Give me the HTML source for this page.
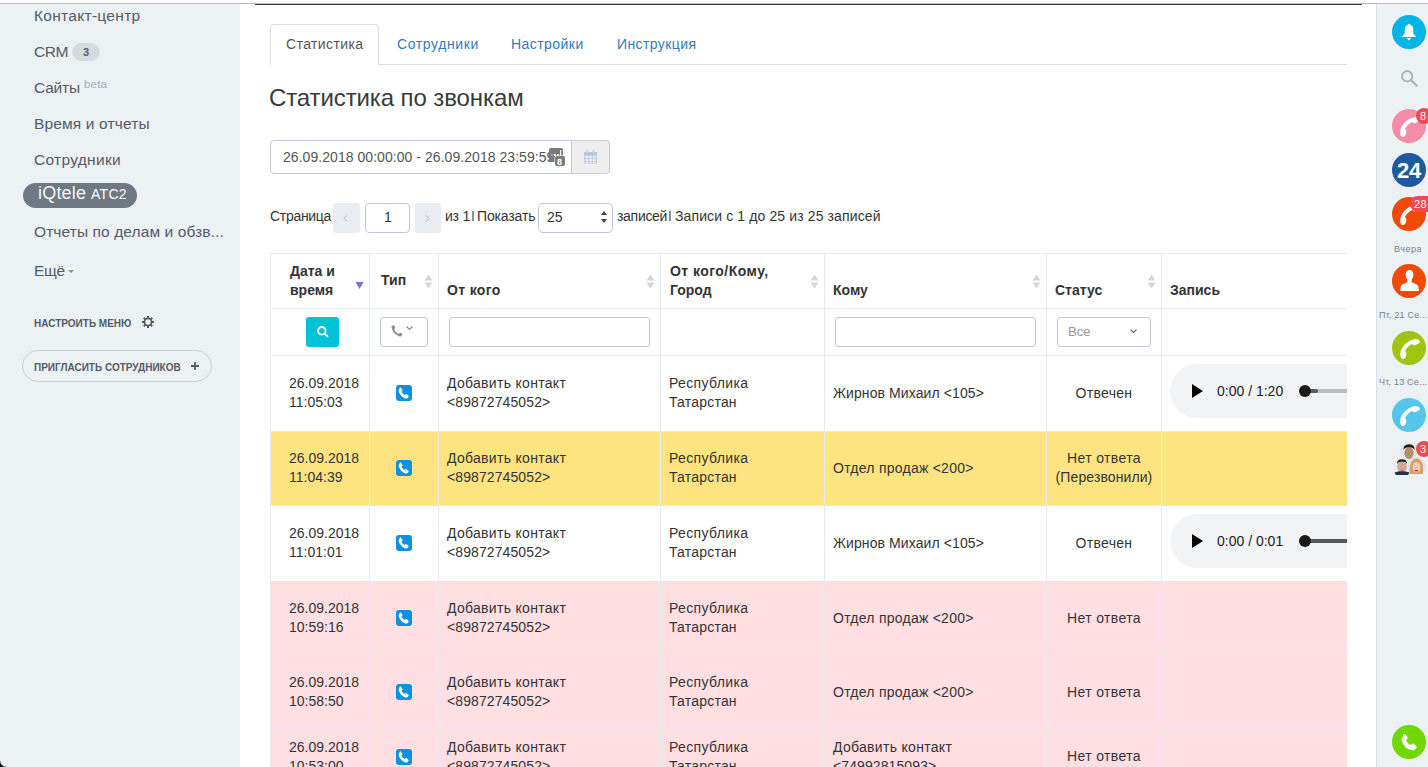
<!DOCTYPE html>
<html><head><meta charset="utf-8"><style>
*{box-sizing:border-box}
html,body{margin:0;padding:0}
body{width:1428px;height:767px;overflow:hidden;position:relative;background:#fff;font-family:"Liberation Sans",sans-serif;color:#333}
.t{position:absolute;white-space:nowrap}
.b{position:absolute}
svg{position:absolute;overflow:visible}
#tw{position:absolute;left:0;top:0;width:1347px;height:767px;overflow:hidden}
</style></head><body>
<div class="b" style="left:0px;top:4px;width:240px;height:763px;background:#ecf1f4"></div>
<div class="b" style="left:1376px;top:4px;width:52px;height:763px;background:#ecf1f4;border-left:1px solid #d9e1e6"></div>
<div class="b" style="left:0px;top:3px;width:1428px;height:1px;background:#bbbbbd"></div>
<div class="b" style="left:255px;top:4px;width:1107px;height:1px;background:#363a4c"></div>
<div class="t" style="left:34px;top:8px;font-size:15.5px;line-height:15.5px;color:#535c69;font-weight:normal;letter-spacing:0.3px;">Контакт-центр</div>
<div class="t" style="left:34px;top:44px;font-size:15.5px;line-height:15.5px;color:#535c69;font-weight:normal;letter-spacing:-0.4px;">CRM</div>
<div class="b" style="left:72px;top:43px;width:28px;height:18px;background:#d5dbe1;border-radius:9px"></div>
<div class="t" style="left:83px;top:47px;font-size:11px;line-height:11px;color:#535c69;font-weight:bold;">3</div>
<div class="t" style="left:34px;top:80px;font-size:15.5px;line-height:15.5px;color:#535c69;font-weight:normal;letter-spacing:-0.2px;">Сайты</div>
<div class="t" style="left:84px;top:79px;font-size:11.5px;line-height:11.5px;color:#a7adb3;font-weight:normal;letter-spacing:0.2px">beta</div>
<div class="t" style="left:34px;top:116px;font-size:15.5px;line-height:15.5px;color:#535c69;font-weight:normal;letter-spacing:0.15px;">Время и отчеты</div>
<div class="t" style="left:34px;top:152px;font-size:15.5px;line-height:15.5px;color:#535c69;font-weight:normal;letter-spacing:0.3px;">Сотрудники</div>
<div class="b" style="left:23px;top:183px;width:114px;height:25px;background:#6f7983;border-radius:13px"></div>
<div class="t" style="left:38px;top:184px;font-size:18px;line-height:18px;color:#f4f4f4;font-weight:normal;letter-spacing:0.2px">iQtele</div>
<div class="t" style="left:91px;top:187px;font-size:14px;line-height:14px;color:#fff;font-weight:normal;letter-spacing:0.3px">ATC2</div>
<div class="t" style="left:34px;top:224px;font-size:15.5px;line-height:15.5px;color:#535c69;font-weight:normal;letter-spacing:0.1px;">Отчеты по делам и обзв...</div>
<div class="t" style="left:34px;top:263px;font-size:15.5px;line-height:15.5px;color:#535c69;font-weight:normal;letter-spacing:-0.3px;">Ещё</div>
<svg style="left:68px;top:270px" width="6" height="3" viewBox="0 0 6 3"><path d="M0 0h6l-3 3z" fill="#8a929b"/></svg>
<div class="t" style="left:34px;top:319px;font-size:10px;line-height:10px;color:#535c69;font-weight:bold;">НАСТРОИТЬ МЕНЮ</div>
<svg style="left:142px;top:316px" width="12" height="12" viewBox="0 0 12 12"><g transform="translate(6 6)" fill="#535c69"><rect x="-1" y="-6" width="2" height="12"/><rect x="-1" y="-6" width="2" height="12" transform="rotate(45)"/><rect x="-1" y="-6" width="2" height="12" transform="rotate(90)"/><rect x="-1" y="-6" width="2" height="12" transform="rotate(135)"/><circle r="4.400"/></g><circle cx="6" cy="6" r="2.700" fill="#ecf1f4"/></svg>
<div class="b" style="left:22px;top:350px;width:190px;height:32px;border:1px solid #c9d0d6;border-radius:16px"></div>
<div class="t" style="left:34px;top:363px;font-size:10px;line-height:10px;color:#535c69;font-weight:bold;">ПРИГЛАСИТЬ СОТРУДНИКОВ</div>
<svg style="left:191px;top:362px" width="8" height="8" viewBox="0 0 8 8"><path d="M3.1 0h1.8v8H3.1z M0 3.1h8v1.8H0z" fill="#535c69"/></svg>
<div class="b" style="left:270px;top:64px;width:1077px;height:1px;background:#dddddd"></div>
<div class="b" style="left:270px;top:24px;width:109px;height:41px;background:#fff;border:1px solid #dddddd;border-bottom:1px solid #fff;border-radius:4px 4px 0 0"></div>
<div class="t" style="left:286px;top:37px;font-size:14px;line-height:14px;color:#555;font-weight:normal;letter-spacing:0.4px">Статистика</div>
<div class="t" style="left:397px;top:37px;font-size:14px;line-height:14px;color:#2f7bbf;font-weight:normal;letter-spacing:0.6px">Сотрудники</div>
<div class="t" style="left:511px;top:37px;font-size:14px;line-height:14px;color:#2f7bbf;font-weight:normal;letter-spacing:0.45px">Настройки</div>
<div class="t" style="left:617px;top:37px;font-size:14px;line-height:14px;color:#2f7bbf;font-weight:normal;letter-spacing:0.4px">Инструкция</div>
<div class="t" style="left:269px;top:86px;font-size:24px;line-height:24px;color:#3a3a3a;font-weight:normal;letter-spacing:-0.1px">Статистика по звонкам</div>
<div class="b" style="left:270px;top:140px;width:302px;height:34px;border:1px solid #c0cadf;border-radius:4px 0 0 4px"></div>
<div class="t" style="left:283px;top:150px;font-size:14px;line-height:14px;color:#555;font-weight:normal;letter-spacing:0.05px">26.09.2018 00:00:00 - 26.09.2018 23:59:59</div>
<div class="b" style="left:549px;top:148px;width:14px;height:14px;background:#7b7b7b;border-radius:2px"></div>
<svg style="left:551px;top:153px" width="11" height="4" viewBox="0 0 11 4"><rect x="0" y="1" width="2" height="2" fill="#aaa"/><rect x="3" y="1" width="2" height="2" fill="#fff"/><rect x="6" y="1" width="2" height="2" fill="#fff"/><rect x="9" y="-3" width="1.3" height="6" fill="#eee"/></svg>
<div class="b" style="left:555px;top:156px;width:10px;height:10px;background:#7b7b7b;border-radius:2px;box-shadow:0 0 0 0.5px #fff"></div>
<div class="t" style="left:557px;top:158px;font-size:9px;line-height:9px;color:#fff;font-weight:bold;">8</div>
<div class="b" style="left:572px;top:140px;width:38px;height:34px;background:#eeeeee;border:1px solid #cccccc;border-left:none;border-radius:0 4px 4px 0"></div>
<svg style="left:584px;top:150px" width="13" height="14" viewBox="0 0 13 14"><rect x="0" y="2" width="13" height="12" rx="1" fill="#c5d0e2"/><rect x="0" y="2" width="13" height="3" fill="#b8c4d8"/><g fill="#eeeeee"><rect x="1.5" y="6" width="2.5" height="2"/><rect x="5.25" y="6" width="2.5" height="2"/><rect x="9" y="6" width="2.5" height="2"/><rect x="1.5" y="9" width="2.5" height="2"/><rect x="5.25" y="9" width="2.5" height="2"/><rect x="9" y="9" width="2.5" height="2"/><rect x="1.5" y="12" width="2.5" height="1.3"/><rect x="5.25" y="12" width="2.5" height="1.3"/><rect x="9" y="12" width="2.5" height="1.3"/></g><rect x="2.5" y="0" width="2" height="4" rx="1" fill="#c5d0e2"/><rect x="8.5" y="0" width="2" height="4" rx="1" fill="#c5d0e2"/></svg>
<div class="t" style="left:270px;top:209px;font-size:14px;line-height:14px;color:#333;font-weight:normal;letter-spacing:-0.3px">Страница</div>
<div class="b" style="left:333px;top:203px;width:27px;height:30px;background:#e9ecf1;border-radius:3px"></div>
<svg style="left:343px;top:215px" width="5" height="7" viewBox="0 0 5 7"><path d="M4 0.5L1 3.5L4 6.5" fill="none" stroke="#a9b0b9" stroke-width="1"/></svg>
<div class="b" style="left:365px;top:203px;width:45px;height:30px;border:1px solid #c0cadf;border-radius:4px"></div>
<div class="t" style="left:288px;width:200px;text-align:center;top:210px;font-size:14px;line-height:14px;color:#333;font-weight:normal;">1</div>
<div class="b" style="left:415px;top:203px;width:26px;height:30px;background:#e9ecf1;border-radius:3px"></div>
<svg style="left:425px;top:215px" width="5" height="7" viewBox="0 0 5 7"><path d="M1 0.5L4 3.5L1 6.5" fill="none" stroke="#a9b0b9" stroke-width="1"/></svg>
<div class="t" style="left:445px;top:209px;font-size:14px;line-height:14px;color:#333;font-weight:normal;letter-spacing:-0.2px">из 1</div>
<div class="b" style="left:472px;top:211px;width:2px;height:10px;background:#8f8f8f"></div>
<div class="t" style="left:477px;top:209px;font-size:14px;line-height:14px;color:#333;font-weight:normal;letter-spacing:-0.15px">Показать</div>
<div class="b" style="left:538px;top:203px;width:75px;height:30px;border:1px solid #c0cadf;border-radius:5px"></div>
<div class="t" style="left:547px;top:210px;font-size:14px;line-height:14px;color:#333;font-weight:normal;">25</div>
<svg style="left:601px;top:210px" width="6" height="14" viewBox="0 0 6 14"><path d="M0 5L3 1L6 5z M0 9L3 13L6 9z" fill="#444"/></svg>
<div class="t" style="left:617px;top:209px;font-size:14px;line-height:14px;color:#333;font-weight:normal;letter-spacing:-0.3px">записей</div>
<div class="b" style="left:669px;top:211px;width:2px;height:10px;background:#8f8f8f"></div>
<div class="t" style="left:675px;top:209px;font-size:14px;line-height:14px;color:#333;font-weight:normal;letter-spacing:0.12px">Записи с 1 до 25 из 25 записей</div>
<div id="tw">
<div class="b" style="left:270px;top:432px;width:1100px;height:73px;background:#fde480"></div>
<div class="b" style="left:270px;top:582px;width:1100px;height:73px;background:#ffdfe1"></div>
<div class="b" style="left:270px;top:656px;width:1100px;height:73px;background:#ffdfe1"></div>
<div class="b" style="left:270px;top:730px;width:1100px;height:70px;background:#ffdfe1"></div>
<div class="b" style="left:270px;top:253px;width:1100px;height:1px;background:#e5e9f1"></div>
<div class="b" style="left:270px;top:308px;width:1100px;height:1px;background:#e5e9f1"></div>
<div class="b" style="left:270px;top:355px;width:1100px;height:1px;background:#e5e9f1"></div>
<div class="b" style="left:270px;top:431px;width:1100px;height:1px;background:#e5e9f1"></div>
<div class="b" style="left:270px;top:505px;width:1100px;height:1px;background:#e5e9f1"></div>
<div class="b" style="left:270px;top:581px;width:1100px;height:1px;background:#e5e9f1"></div>
<div class="b" style="left:270px;top:655px;width:1100px;height:1px;background:#e5e9f1"></div>
<div class="b" style="left:270px;top:729px;width:1100px;height:1px;background:#e5e9f1"></div>
<div class="b" style="left:270px;top:253px;width:1px;height:520px;background:#e5e9f1"></div>
<div class="b" style="left:369px;top:253px;width:1px;height:520px;background:#e5e9f1"></div>
<div class="b" style="left:438px;top:253px;width:1px;height:520px;background:#e5e9f1"></div>
<div class="b" style="left:660px;top:253px;width:1px;height:520px;background:#e5e9f1"></div>
<div class="b" style="left:824px;top:253px;width:1px;height:520px;background:#e5e9f1"></div>
<div class="b" style="left:1046px;top:253px;width:1px;height:520px;background:#e5e9f1"></div>
<div class="b" style="left:1161px;top:253px;width:1px;height:520px;background:#e5e9f1"></div>
<div class="t" style="left:290px;top:264px;font-size:14px;line-height:14px;color:#333;font-weight:bold;">Дата и</div>
<div class="t" style="left:290px;top:283px;font-size:14px;line-height:14px;color:#333;font-weight:bold;">время</div>
<svg style="left:355px;top:282px" width="9" height="7" viewBox="0 0 9 7"><path d="M0.5 0h8L4.5 7z" fill="#7b70e4"/></svg>
<div class="t" style="left:381px;top:273px;font-size:14px;line-height:14px;color:#333;font-weight:bold;">Тип</div>
<svg style="left:424px;top:274px" width="9" height="15" viewBox="0 0 9 15"><path d="M0.5 6.5L4.5 0.5L8.5 6.5z M0.5 8.5L4.5 14.5L8.5 8.5z" fill="#d6d6d6"/></svg>
<div class="t" style="left:447px;top:283px;font-size:14px;line-height:14px;color:#333;font-weight:bold;letter-spacing:0.35px">От кого</div>
<svg style="left:646px;top:274px" width="9" height="15" viewBox="0 0 9 15"><path d="M0.5 6.5L4.5 0.5L8.5 6.5z M0.5 8.5L4.5 14.5L8.5 8.5z" fill="#d6d6d6"/></svg>
<div class="t" style="left:670px;top:264px;font-size:14px;line-height:14px;color:#333;font-weight:bold;letter-spacing:0.45px">От кого/Кому,</div>
<div class="t" style="left:670px;top:283px;font-size:14px;line-height:14px;color:#333;font-weight:bold;letter-spacing:0px">Город</div>
<svg style="left:810px;top:274px" width="9" height="15" viewBox="0 0 9 15"><path d="M0.5 6.5L4.5 0.5L8.5 6.5z M0.5 8.5L4.5 14.5L8.5 8.5z" fill="#d6d6d6"/></svg>
<div class="t" style="left:833px;top:283px;font-size:14px;line-height:14px;color:#333;font-weight:bold;">Кому</div>
<svg style="left:1032px;top:274px" width="9" height="15" viewBox="0 0 9 15"><path d="M0.5 6.5L4.5 0.5L8.5 6.5z M0.5 8.5L4.5 14.5L8.5 8.5z" fill="#d6d6d6"/></svg>
<div class="t" style="left:1055px;top:283px;font-size:14px;line-height:14px;color:#333;font-weight:bold;">Статус</div>
<svg style="left:1147px;top:274px" width="9" height="15" viewBox="0 0 9 15"><path d="M0.5 6.5L4.5 0.5L8.5 6.5z M0.5 8.5L4.5 14.5L8.5 8.5z" fill="#d6d6d6"/></svg>
<div class="t" style="left:1170px;top:283px;font-size:14px;line-height:14px;color:#333;font-weight:bold;">Запись</div>
<div class="b" style="left:306px;top:317px;width:33px;height:30px;background:#00c4d6;border-radius:3px"></div>
<svg style="left:316px;top:325px" width="13" height="13" viewBox="0 0 13 13"><circle cx="5.8" cy="5.8" r="3.8" fill="none" stroke="#fff" stroke-width="1.8"/><path d="M8.5 8.5L11.5 11.5" stroke="#fff" stroke-width="1.8" stroke-linecap="round"/></svg>
<div class="b" style="left:380px;top:317px;width:48px;height:30px;border:1px solid #c3cadd;border-radius:3px"></div>
<svg style="left:391px;top:325px" width="12" height="12" viewBox="0 0 12 12"><path d="M1.9 3.2Q2.600 8.300 8.300 10.300" fill="none" stroke="#8c8c8c" stroke-width="1.9"/><ellipse cx="2.300" cy="2.300" rx="1.700" ry="2" transform="rotate(-35 2.300 2.300)" fill="#8c8c8c"/><ellipse cx="9.300" cy="9.700" rx="2" ry="1.700" transform="rotate(-35 9.300 9.700)" fill="#8c8c8c"/></svg>
<svg style="left:406px;top:326px" width="7" height="4" viewBox="0 0 7 4"><path d="M0.5 0.5L3.5 3.5L6.5 0.5" fill="none" stroke="#888" stroke-width="1.1"/></svg>
<div class="b" style="left:449px;top:317px;width:201px;height:30px;border:1px solid #c3cadd;border-radius:3px"></div>
<div class="b" style="left:835px;top:317px;width:201px;height:30px;border:1px solid #c3cadd;border-radius:3px"></div>
<div class="b" style="left:1057px;top:317px;width:94px;height:30px;border:1px solid #c3cadd;border-radius:3px"></div>
<div class="t" style="left:1068px;top:325px;font-size:13px;line-height:13px;color:#999;font-weight:normal;">Все</div>
<svg style="left:1130px;top:329px" width="7" height="4" viewBox="0 0 7 4"><path d="M0.5 0.5L3.5 3.5L6.5 0.5" fill="none" stroke="#666" stroke-width="1.1"/></svg>
<div class="t" style="left:289px;top:376px;font-size:14px;line-height:14px;color:#333;font-weight:normal;">26.09.2018</div>
<div class="t" style="left:289px;top:395px;font-size:14px;line-height:14px;color:#333;font-weight:normal;">11:05:03</div>
<div class="b" style="left:396px;top:385px;width:16px;height:16px;background:#0e91e3;border-radius:3px"></div>
<svg style="left:396px;top:385px" width="16" height="16" viewBox="0 0 16 16"><path d="M3.3 2.6c0.4-0.3 0.9-0.3 1.2 0.1l1.1 1.6c0.3 0.4 0.2 0.9-0.2 1.2l-0.6 0.5c0.5 1.2 1.6 2.4 2.9 3l0.5-0.5c0.4-0.3 0.9-0.4 1.2-0.1l1.5 1.2c0.4 0.3 0.4 0.9 0.1 1.2l-0.8 0.9c-0.5 0.5-1.3 0.7-2 0.4C5.400 11.000 3.300 8.700 2.400 6.000c-0.3-0.8 0-1.600 0.5-2.200z" fill="#fff" transform="translate(8.6 8.6) scale(1.13) translate(-7.6 -7.8)"/></svg>
<div class="t" style="left:447px;top:376px;font-size:14px;line-height:14px;color:#333;font-weight:normal;letter-spacing:0.3px">Добавить контакт</div>
<div class="t" style="left:447px;top:395px;font-size:14px;line-height:14px;color:#333;font-weight:normal;letter-spacing:0.1px">&lt;89872745052&gt;</div>
<div class="t" style="left:669px;top:376px;font-size:14px;line-height:14px;color:#333;font-weight:normal;letter-spacing:0.35px">Республика</div>
<div class="t" style="left:669px;top:395px;font-size:14px;line-height:14px;color:#333;font-weight:normal;letter-spacing:0.2px">Татарстан</div>
<div class="t" style="left:833px;top:386px;font-size:14px;line-height:14px;color:#333;font-weight:normal;letter-spacing:0.1px">Жирнов Михаил &lt;105&gt;</div>
<div class="t" style="left:1004px;width:200px;text-align:center;top:386px;font-size:14px;line-height:14px;color:#333;font-weight:normal;letter-spacing:0.3px">Отвечен</div>
<div class="b" style="left:1170px;top:364px;width:260px;height:54px;border-radius:27px;background:#f1f3f4"></div>
<svg style="left:1192px;top:384px" width="11" height="14" viewBox="0 0 11 14"><path d="M0 0L11 7L0 14z" fill="#000"/></svg>
<div class="t" style="left:1217px;top:384px;font-size:14px;line-height:14px;color:#222;font-weight:normal;">0:00 / 1:20</div>
<div class="b" style="left:1305px;top:389px;width:60px;height:4px;background:#bdbdbd;border-radius:2px"></div>
<div class="b" style="left:1305px;top:389px;width:13px;height:4px;background:#5a5a5a;border-radius:2px"></div>
<div class="b" style="left:1299px;top:385px;width:12px;height:12px;border-radius:6px;background:#1a1a1a"></div>
<div class="t" style="left:289px;top:451px;font-size:14px;line-height:14px;color:#333;font-weight:normal;">26.09.2018</div>
<div class="t" style="left:289px;top:470px;font-size:14px;line-height:14px;color:#333;font-weight:normal;">11:04:39</div>
<div class="b" style="left:396px;top:460px;width:16px;height:16px;background:#0e91e3;border-radius:3px"></div>
<svg style="left:396px;top:460px" width="16" height="16" viewBox="0 0 16 16"><path d="M3.3 2.6c0.4-0.3 0.9-0.3 1.2 0.1l1.1 1.6c0.3 0.4 0.2 0.9-0.2 1.2l-0.6 0.5c0.5 1.2 1.6 2.4 2.9 3l0.5-0.5c0.4-0.3 0.9-0.4 1.2-0.1l1.5 1.2c0.4 0.3 0.4 0.9 0.1 1.2l-0.8 0.9c-0.5 0.5-1.3 0.7-2 0.4C5.400 11.000 3.300 8.700 2.400 6.000c-0.3-0.8 0-1.600 0.5-2.200z" fill="#fff" transform="translate(8.6 8.6) scale(1.13) translate(-7.6 -7.8)"/></svg>
<div class="t" style="left:447px;top:451px;font-size:14px;line-height:14px;color:#333;font-weight:normal;letter-spacing:0.3px">Добавить контакт</div>
<div class="t" style="left:447px;top:470px;font-size:14px;line-height:14px;color:#333;font-weight:normal;letter-spacing:0.1px">&lt;89872745052&gt;</div>
<div class="t" style="left:669px;top:451px;font-size:14px;line-height:14px;color:#333;font-weight:normal;letter-spacing:0.35px">Республика</div>
<div class="t" style="left:669px;top:470px;font-size:14px;line-height:14px;color:#333;font-weight:normal;letter-spacing:0.2px">Татарстан</div>
<div class="t" style="left:833px;top:461px;font-size:14px;line-height:14px;color:#333;font-weight:normal;letter-spacing:0.25px">Отдел продаж &lt;200&gt;</div>
<div class="t" style="left:1004px;width:200px;text-align:center;top:451px;font-size:14px;line-height:14px;color:#333;font-weight:normal;letter-spacing:0.35px">Нет ответа</div>
<div class="t" style="left:1004px;width:200px;text-align:center;top:470px;font-size:14px;line-height:14px;color:#333;font-weight:normal;letter-spacing:0.1px">(Перезвонили)</div>
<div class="t" style="left:289px;top:526px;font-size:14px;line-height:14px;color:#333;font-weight:normal;">26.09.2018</div>
<div class="t" style="left:289px;top:545px;font-size:14px;line-height:14px;color:#333;font-weight:normal;">11:01:01</div>
<div class="b" style="left:396px;top:535px;width:16px;height:16px;background:#0e91e3;border-radius:3px"></div>
<svg style="left:396px;top:535px" width="16" height="16" viewBox="0 0 16 16"><path d="M3.3 2.6c0.4-0.3 0.9-0.3 1.2 0.1l1.1 1.6c0.3 0.4 0.2 0.9-0.2 1.2l-0.6 0.5c0.5 1.2 1.6 2.4 2.9 3l0.5-0.5c0.4-0.3 0.9-0.4 1.2-0.1l1.5 1.2c0.4 0.3 0.4 0.9 0.1 1.2l-0.8 0.9c-0.5 0.5-1.3 0.7-2 0.4C5.400 11.000 3.300 8.700 2.400 6.000c-0.3-0.8 0-1.600 0.5-2.200z" fill="#fff" transform="translate(8.6 8.6) scale(1.13) translate(-7.6 -7.8)"/></svg>
<div class="t" style="left:447px;top:526px;font-size:14px;line-height:14px;color:#333;font-weight:normal;letter-spacing:0.3px">Добавить контакт</div>
<div class="t" style="left:447px;top:545px;font-size:14px;line-height:14px;color:#333;font-weight:normal;letter-spacing:0.1px">&lt;89872745052&gt;</div>
<div class="t" style="left:669px;top:526px;font-size:14px;line-height:14px;color:#333;font-weight:normal;letter-spacing:0.35px">Республика</div>
<div class="t" style="left:669px;top:545px;font-size:14px;line-height:14px;color:#333;font-weight:normal;letter-spacing:0.2px">Татарстан</div>
<div class="t" style="left:833px;top:536px;font-size:14px;line-height:14px;color:#333;font-weight:normal;letter-spacing:0.1px">Жирнов Михаил &lt;105&gt;</div>
<div class="t" style="left:1004px;width:200px;text-align:center;top:536px;font-size:14px;line-height:14px;color:#333;font-weight:normal;letter-spacing:0.3px">Отвечен</div>
<div class="b" style="left:1170px;top:514px;width:260px;height:54px;border-radius:27px;background:#f1f3f4"></div>
<svg style="left:1192px;top:534px" width="11" height="14" viewBox="0 0 11 14"><path d="M0 0L11 7L0 14z" fill="#000"/></svg>
<div class="t" style="left:1217px;top:534px;font-size:14px;line-height:14px;color:#222;font-weight:normal;">0:00 / 0:01</div>
<div class="b" style="left:1305px;top:539px;width:60px;height:4px;background:#5a5a5a;border-radius:2px"></div>
<div class="b" style="left:1299px;top:535px;width:12px;height:12px;border-radius:6px;background:#1a1a1a"></div>
<div class="t" style="left:289px;top:601px;font-size:14px;line-height:14px;color:#333;font-weight:normal;">26.09.2018</div>
<div class="t" style="left:289px;top:620px;font-size:14px;line-height:14px;color:#333;font-weight:normal;">10:59:16</div>
<div class="b" style="left:396px;top:610px;width:16px;height:16px;background:#0e91e3;border-radius:3px"></div>
<svg style="left:396px;top:610px" width="16" height="16" viewBox="0 0 16 16"><path d="M3.3 2.6c0.4-0.3 0.9-0.3 1.2 0.1l1.1 1.6c0.3 0.4 0.2 0.9-0.2 1.2l-0.6 0.5c0.5 1.2 1.6 2.4 2.9 3l0.5-0.5c0.4-0.3 0.9-0.4 1.2-0.1l1.5 1.2c0.4 0.3 0.4 0.9 0.1 1.2l-0.8 0.9c-0.5 0.5-1.3 0.7-2 0.4C5.400 11.000 3.300 8.700 2.400 6.000c-0.3-0.8 0-1.600 0.5-2.200z" fill="#fff" transform="translate(8.6 8.6) scale(1.13) translate(-7.6 -7.8)"/></svg>
<div class="t" style="left:447px;top:601px;font-size:14px;line-height:14px;color:#333;font-weight:normal;letter-spacing:0.3px">Добавить контакт</div>
<div class="t" style="left:447px;top:620px;font-size:14px;line-height:14px;color:#333;font-weight:normal;letter-spacing:0.1px">&lt;89872745052&gt;</div>
<div class="t" style="left:669px;top:601px;font-size:14px;line-height:14px;color:#333;font-weight:normal;letter-spacing:0.35px">Республика</div>
<div class="t" style="left:669px;top:620px;font-size:14px;line-height:14px;color:#333;font-weight:normal;letter-spacing:0.2px">Татарстан</div>
<div class="t" style="left:833px;top:611px;font-size:14px;line-height:14px;color:#333;font-weight:normal;letter-spacing:0.25px">Отдел продаж &lt;200&gt;</div>
<div class="t" style="left:1004px;width:200px;text-align:center;top:611px;font-size:14px;line-height:14px;color:#333;font-weight:normal;letter-spacing:0.35px">Нет ответа</div>
<div class="t" style="left:289px;top:675px;font-size:14px;line-height:14px;color:#333;font-weight:normal;">26.09.2018</div>
<div class="t" style="left:289px;top:694px;font-size:14px;line-height:14px;color:#333;font-weight:normal;">10:58:50</div>
<div class="b" style="left:396px;top:684px;width:16px;height:16px;background:#0e91e3;border-radius:3px"></div>
<svg style="left:396px;top:684px" width="16" height="16" viewBox="0 0 16 16"><path d="M3.3 2.6c0.4-0.3 0.9-0.3 1.2 0.1l1.1 1.6c0.3 0.4 0.2 0.9-0.2 1.2l-0.6 0.5c0.5 1.2 1.6 2.4 2.9 3l0.5-0.5c0.4-0.3 0.9-0.4 1.2-0.1l1.5 1.2c0.4 0.3 0.4 0.9 0.1 1.2l-0.8 0.9c-0.5 0.5-1.3 0.7-2 0.4C5.400 11.000 3.300 8.700 2.400 6.000c-0.3-0.8 0-1.600 0.5-2.200z" fill="#fff" transform="translate(8.6 8.6) scale(1.13) translate(-7.6 -7.8)"/></svg>
<div class="t" style="left:447px;top:675px;font-size:14px;line-height:14px;color:#333;font-weight:normal;letter-spacing:0.3px">Добавить контакт</div>
<div class="t" style="left:447px;top:694px;font-size:14px;line-height:14px;color:#333;font-weight:normal;letter-spacing:0.1px">&lt;89872745052&gt;</div>
<div class="t" style="left:669px;top:675px;font-size:14px;line-height:14px;color:#333;font-weight:normal;letter-spacing:0.35px">Республика</div>
<div class="t" style="left:669px;top:694px;font-size:14px;line-height:14px;color:#333;font-weight:normal;letter-spacing:0.2px">Татарстан</div>
<div class="t" style="left:833px;top:685px;font-size:14px;line-height:14px;color:#333;font-weight:normal;letter-spacing:0.25px">Отдел продаж &lt;200&gt;</div>
<div class="t" style="left:1004px;width:200px;text-align:center;top:685px;font-size:14px;line-height:14px;color:#333;font-weight:normal;letter-spacing:0.35px">Нет ответа</div>
<div class="t" style="left:289px;top:740px;font-size:14px;line-height:14px;color:#333;font-weight:normal;">26.09.2018</div>
<div class="t" style="left:289px;top:759px;font-size:14px;line-height:14px;color:#333;font-weight:normal;">10:53:00</div>
<div class="b" style="left:396px;top:749px;width:16px;height:16px;background:#0e91e3;border-radius:3px"></div>
<svg style="left:396px;top:749px" width="16" height="16" viewBox="0 0 16 16"><path d="M3.3 2.6c0.4-0.3 0.9-0.3 1.2 0.1l1.1 1.6c0.3 0.4 0.2 0.9-0.2 1.2l-0.6 0.5c0.5 1.2 1.6 2.4 2.9 3l0.5-0.5c0.4-0.3 0.9-0.4 1.2-0.1l1.5 1.2c0.4 0.3 0.4 0.9 0.1 1.2l-0.8 0.9c-0.5 0.5-1.3 0.7-2 0.4C5.400 11.000 3.300 8.700 2.400 6.000c-0.3-0.8 0-1.600 0.5-2.200z" fill="#fff" transform="translate(8.6 8.6) scale(1.13) translate(-7.6 -7.8)"/></svg>
<div class="t" style="left:447px;top:740px;font-size:14px;line-height:14px;color:#333;font-weight:normal;letter-spacing:0.3px">Добавить контакт</div>
<div class="t" style="left:447px;top:759px;font-size:14px;line-height:14px;color:#333;font-weight:normal;letter-spacing:0.1px">&lt;89872745052&gt;</div>
<div class="t" style="left:669px;top:740px;font-size:14px;line-height:14px;color:#333;font-weight:normal;letter-spacing:0.35px">Республика</div>
<div class="t" style="left:669px;top:759px;font-size:14px;line-height:14px;color:#333;font-weight:normal;letter-spacing:0.2px">Татарстан</div>
<div class="t" style="left:833px;top:740px;font-size:14px;line-height:14px;color:#333;font-weight:normal;letter-spacing:0.3px">Добавить контакт</div>
<div class="t" style="left:833px;top:759px;font-size:14px;line-height:14px;color:#333;font-weight:normal;letter-spacing:0.1px">&lt;74992815093&gt;</div>
<div class="t" style="left:1004px;width:200px;text-align:center;top:749px;font-size:14px;line-height:14px;color:#333;font-weight:normal;letter-spacing:0.35px">Нет ответа</div>
</div>
<div class="b" style="left:1392px;top:15px;width:34px;height:34px;border-radius:50%;background:#00b4e5"></div>
<svg style="left:1401px;top:23px" width="16" height="18" viewBox="0 0 16 18"><path d="M8 0.8C8.7 0.8 9.1 1.2 9.2 1.8C11.300 2.400 12.300 4.200 12.300 6.800V10.600L15.300 14H0.700L3.700 10.600V6.800C3.700 4.200 4.700 2.400 6.800 1.800C6.900 1.200 7.300 0.800 8 0.800Z M5.600 15H10.400L8 17.400Z" fill="#fff"/></svg>
<svg style="left:1400px;top:69px" width="19" height="19" viewBox="0 0 19 19"><circle cx="7.200" cy="7.200" r="5.200" fill="none" stroke="#a8b1ba" stroke-width="1.800"/><path d="M11 11L17.400 17.400" stroke="#a8b1ba" stroke-width="2"/></svg>
<div class="b" style="left:1392px;top:109px;width:34px;height:34px;border-radius:50%;background:#f58ca8"></div>
<svg style="left:1392px;top:109px" width="34" height="34" viewBox="0 0 34 34"><path d="M8.2 23C8.5 17 14 10 22 8.2C25 7.8 27.5 8.8 27.8 10.5C28 12 26.5 12.6 25 13.2L22.3 14.6L20 13C17 14.5 14.5 17 13 20L14.4 22.3C14.2 25 13.5 27.5 11.4 28C9 28.5 8 26 8.2 23Z" fill="#fff"/></svg>
<div class="b" style="left:1416px;top:108px;width:16px;height:16px;border-radius:50%;background:#ef4a53"></div>
<div class="t" style="left:1420px;top:111px;font-size:11px;line-height:11px;color:#fff;font-weight:normal;">8</div>
<div class="b" style="left:1392px;top:153px;width:34px;height:34px;border-radius:50%;background:#1e5aa0"></div>
<div class="t" style="left:1397px;top:160px;font-size:22px;line-height:22px;color:#fff;font-weight:bold;letter-spacing:-0.3px">24</div>
<div class="b" style="left:1392px;top:197px;width:34px;height:34px;border-radius:50%;background:#f04a06"></div>
<svg style="left:1392px;top:197px" width="34" height="34" viewBox="0 0 34 34"><path d="M8.2 23C8.5 17 14 10 22 8.2C25 7.8 27.5 8.8 27.8 10.5C28 12 26.5 12.6 25 13.2L22.3 14.6L20 13C17 14.5 14.5 17 13 20L14.4 22.3C14.2 25 13.5 27.5 11.4 28C9 28.5 8 26 8.2 23Z" fill="#fff"/></svg>
<div class="b" style="left:1410px;top:196px;width:26px;height:16px;background:#ef4a53;border-radius:8px"></div>
<div class="t" style="left:1414px;top:199px;font-size:11px;line-height:11px;color:#fff;font-weight:normal;letter-spacing:0.3px">28</div>
<div class="t" style="left:1394px;top:245px;font-size:9px;line-height:9px;color:#7a8089;font-weight:normal;letter-spacing:0.5px">Вчера</div>
<div class="b" style="left:1392px;top:264px;width:34px;height:34px;border-radius:50%;background:#f04a06"></div>
<svg style="left:1392px;top:264px" width="34" height="34" viewBox="0 0 34 34"><path d="M17.5 6C20 6 21.3 7.8 21.3 10.6C21.3 12.6 20.800 14.100 19.800 15.300L19.700 18.300L21.300 19C24 19.900 25.600 20.600 26.200 22.200L27 27H8.200L8.900 22.200C9.500 20.600 11 19.900 13.700 19L15.300 18.300L15.200 15.300C14.200 14.100 13.700 12.600 13.700 10.600C13.700 7.800 15 6 17.500 6Z" fill="#fff"/></svg>
<div class="t" style="left:1379px;top:311px;font-size:9px;line-height:9px;color:#7a8089;font-weight:normal;letter-spacing:0.2px">Пт, 21 Се...</div>
<div class="b" style="left:1392px;top:331px;width:34px;height:34px;border-radius:50%;background:#9ec50f"></div>
<svg style="left:1392px;top:331px" width="34" height="34" viewBox="0 0 34 34"><path d="M8.2 23C8.5 17 14 10 22 8.2C25 7.8 27.5 8.8 27.8 10.5C28 12 26.5 12.6 25 13.2L22.3 14.6L20 13C17 14.5 14.5 17 13 20L14.4 22.3C14.2 25 13.5 27.5 11.4 28C9 28.5 8 26 8.2 23Z" fill="#fff"/></svg>
<div class="t" style="left:1379px;top:378px;font-size:9px;line-height:9px;color:#7a8089;font-weight:normal;letter-spacing:0.2px">Чт, 13 Се...</div>
<div class="b" style="left:1392px;top:398px;width:34px;height:34px;border-radius:50%;background:#55c6eb"></div>
<svg style="left:1392px;top:398px" width="34" height="34" viewBox="0 0 34 34"><path d="M8.2 23C8.5 17 14 10 22 8.2C25 7.8 27.5 8.8 27.8 10.5C28 12 26.5 12.6 25 13.2L22.3 14.6L20 13C17 14.5 14.5 17 13 20L14.4 22.3C14.2 25 13.5 27.5 11.4 28C9 28.5 8 26 8.2 23Z" fill="#fff"/></svg>
<svg style="left:1392px;top:441px" width="34" height="35" viewBox="0 0 34 35"><circle cx="17" cy="17.5" r="17" fill="#edf0f1"/><circle cx="17" cy="10" r="9" fill="#e3e8e8"/><ellipse cx="17" cy="12" rx="4.6" ry="6" fill="#b98d6a"/><path d="M11.5 9Q11 3.500 17 3.300Q23 3.500 22.500 9Q21 6 17 6.300Q13 6 11.500 9Z" fill="#241b17"/><path d="M11 18Q17 22 23 18L23 20Q17 23 11 20Z" fill="#f4f4f4"/><circle cx="10" cy="25" r="9" fill="#e9ecee"/><ellipse cx="10" cy="26" rx="4.800" ry="6" fill="#d2a894"/><path d="M5 23Q4.500 18.500 10 18.300Q15.500 18.500 15 23Q14 20.500 10 20.800Q6 20.500 5 23Z" fill="#2a2725"/><path d="M2.500 31.500Q10 29 17.500 31.500L16 34H4Z" fill="#27314e"/><rect x="8.500" y="29" width="3" height="1.200" rx="0.600" fill="#c0575a"/><circle cx="24.500" cy="25" r="9" fill="#e0e4e7"/><path d="M17.500 33Q17 18 24.500 17.500Q32 18 31 33Z" fill="#d7a35f"/><ellipse cx="24.500" cy="26" rx="4" ry="5.200" fill="#efc9b3"/><path d="M20.300 23Q24.500 19 28.700 23L28.700 21Q24.500 17.800 20.300 21Z" fill="#d7a35f"/><rect x="23" y="29" width="3" height="1.300" rx="0.600" fill="#d3161c"/></svg>
<div class="b" style="left:1416px;top:441px;width:16px;height:16px;border-radius:50%;background:#ef4a53"></div>
<div class="t" style="left:1420px;top:444px;font-size:11px;line-height:11px;color:#fff;font-weight:normal;">3</div>
<div class="b" style="left:1392px;top:725px;width:34px;height:34px;border-radius:50%;background:#70d800"></div>
<svg style="left:1399px;top:732px" width="20" height="20" viewBox="0 0 20 20"><path d="M4.2 2.2c0.6-0.5 1.4-0.4 1.8 0.2l1.5 2.200c0.4 0.6 0.2 1.200-0.3 1.600l-0.9 0.700c0.6 1.700 2.200 3.500 4 4.300l0.8-0.800c0.5-0.500 1.200-0.600 1.700-0.100l2 1.700c0.6 0.500 0.600 1.200 0.100 1.700l-1.100 1.200c-0.700 0.700-1.800 1-2.800 0.500C7.100 14.900 4.000 11.600 2.700 7.800c-0.400-1.100 0-2.200 0.700-3z" fill="#fff" transform="translate(2.6 1.9) scale(1.2) translate(-2.6 -1.9)"/></svg>
<div class="b" style="left:0px;top:761px;width:6px;height:6px;background:radial-gradient(circle at 6px 0px, rgba(0,0,0,0) 5px, #000 6.5px)"></div>
</body></html>
